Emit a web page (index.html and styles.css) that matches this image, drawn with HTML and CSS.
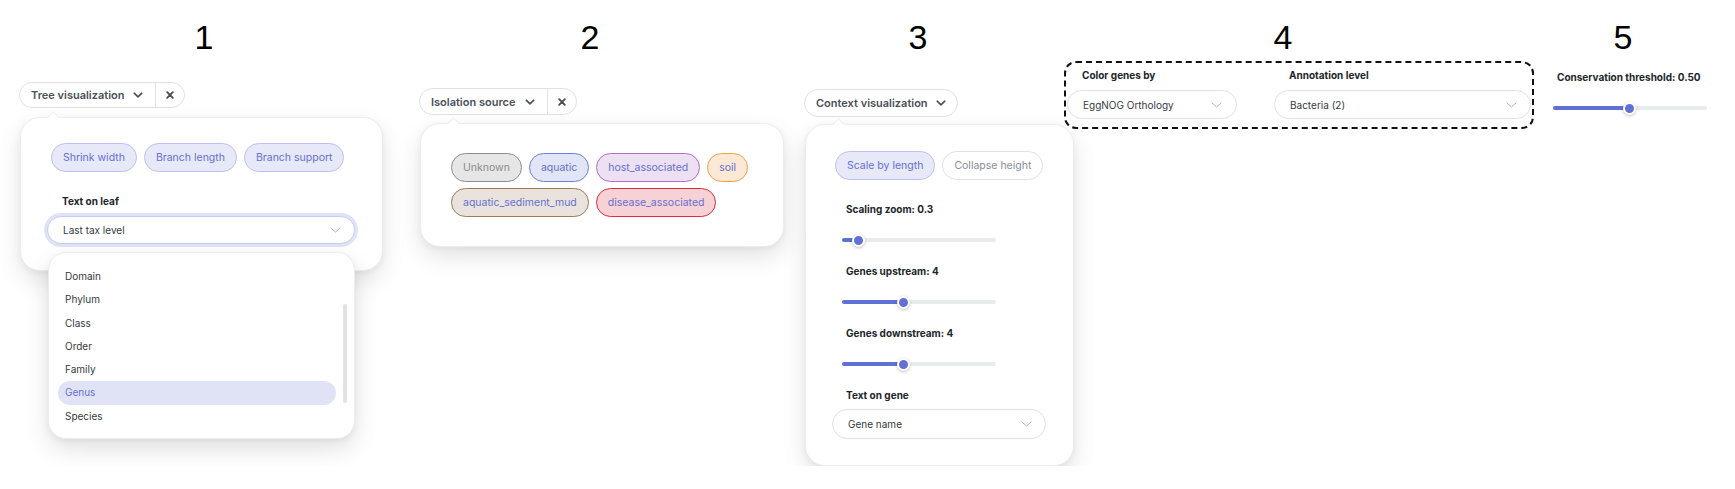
FILE: index.html
```html
<!DOCTYPE html>
<html lang="en">
<head>
<meta charset="utf-8">
<title>Controls</title>
<link rel="stylesheet" href="styles.css">
</head>
<body>
<div class="board">

  <section class="col col1">
    <div class="num">1</div>
    <div class="btn-group g1">
      <span class="btn-main">Tree visualization
        <svg class="chev-b" width="10" height="6" viewBox="0 0 10 6"><path d="M1.2 1.2l3.8 3.6 3.8-3.6"/></svg>
      </span>
      <span class="btn-close"><svg width="8" height="8" viewBox="0 0 8 8"><path d="M1.2 1.2l5.6 5.6M6.8 1.2L1.2 6.8"/></svg></span>
    </div>
    <div class="popover pop1">
      <div class="chips c1">
        <span class="chip on">Shrink width</span>
        <span class="chip on">Branch length</span>
        <span class="chip on">Branch support</span>
      </div>
      <div class="label l1">Text on leaf</div>
      <div class="select focused">
        <span>Last tax level</span>
        <svg class="chev-s" width="11" height="6" viewBox="0 0 11 6"><path d="M1 1l4.5 4 4.5-4"/></svg>
      </div>
      <div class="dropdown">
        <div class="options">
          <div class="opt">Domain</div>
          <div class="opt">Phylum</div>
          <div class="opt">Class</div>
          <div class="opt">Order</div>
          <div class="opt">Family</div>
          <div class="opt sel">Genus</div>
          <div class="opt">Species</div>
        </div>
        <div class="scrollbar"></div>
      </div>
    </div>
  </section>

  <section class="col col2">
    <div class="num">2</div>
    <div class="btn-group g2">
      <span class="btn-main">Isolation source
        <svg class="chev-b" width="10" height="6" viewBox="0 0 10 6"><path d="M1.2 1.2l3.8 3.6 3.8-3.6"/></svg>
      </span>
      <span class="btn-close"><svg width="8" height="8" viewBox="0 0 8 8"><path d="M1.2 1.2l5.6 5.6M6.8 1.2L1.2 6.8"/></svg></span>
    </div>
    <div class="popover pop2">
      <div class="chips">
        <span class="chip src unknown">Unknown</span>
        <span class="chip src aquatic">aquatic</span>
        <span class="chip src host">host_associated</span>
        <span class="chip src soil">soil</span>
        <span class="chip src mud">aquatic_sediment_mud</span>
        <span class="chip src disease">disease_associated</span>
      </div>
    </div>
  </section>

  <section class="col col3">
    <div class="num">3</div>
    <div class="btn-group g3">
      <span class="btn-main">Context visualization
        <svg class="chev-b" width="10" height="6" viewBox="0 0 10 6"><path d="M1.2 1.2l3.8 3.6 3.8-3.6"/></svg>
      </span>
    </div>
    <div class="popover pop3">
      <div class="chips">
        <span class="chip on">Scale by length</span>
        <span class="chip off">Collapse height</span>
      </div>
      <div class="label l3 first">Scaling zoom: 0.3</div>
      <div class="slider s3"><div class="track"><div class="fill" style="width:16px"></div></div><div class="thumb" style="left:16px"></div></div>
      <div class="label l3">Genes upstream: 4</div>
      <div class="slider s3"><div class="track"><div class="fill" style="width:61px"></div></div><div class="thumb" style="left:61px"></div></div>
      <div class="label l3">Genes downstream: 4</div>
      <div class="slider s3"><div class="track"><div class="fill" style="width:61px"></div></div><div class="thumb" style="left:61px"></div></div>
      <div class="label l3 last">Text on gene</div>
      <div class="select plain gene">
        <span>Gene name</span>
        <svg class="chev-s" width="11" height="6" viewBox="0 0 11 6"><path d="M1 1l4.5 4 4.5-4"/></svg>
      </div>
    </div>
  </section>

  <section class="col col4">
    <div class="num">4</div>
    <div class="dashed">
      <div class="field">
        <div class="label l4">Color genes by</div>
        <div class="select plain egg">
          <span>EggNOG Orthology</span>
          <svg class="chev-s" width="11" height="6" viewBox="0 0 11 6"><path d="M1 1l4.5 4 4.5-4"/></svg>
        </div>
      </div>
      <div class="field">
        <div class="label l4">Annotation level</div>
        <div class="select plain bact">
          <span>Bacteria (2)</span>
          <svg class="chev-s" width="11" height="6" viewBox="0 0 11 6"><path d="M1 1l4.5 4 4.5-4"/></svg>
        </div>
      </div>
    </div>
  </section>

  <section class="col col5">
    <div class="num">5</div>
    <div class="label l5">Conservation threshold: 0.50</div>
    <div class="slider s5"><div class="track"><div class="fill" style="width:76px"></div></div><div class="thumb" style="left:76px"></div></div>
  </section>

</div>
</body>
</html>
```

FILE: styles.css
```css
* { box-sizing: border-box; }

body {
  margin: 0;
  background: #fff;
  color: #212529;
  font-family: Inter, "Noto Sans", sans-serif;
}

.board {
  display: flex;
  align-items: flex-start;
  padding: 17px 0 0 19px;
}

.col {
  display: flex;
  flex-direction: column;
  align-items: flex-start;
  flex: none;
}
.col1 { width: 370px; }
.col2 { width: 342px; margin-left: 30px; }
.col3 { width: 228px; margin-left: 43px; }
.col4 { width: 438px; margin-left: 32px; }
.col5 { width: 140px; margin-left: 51px; }

.num {
  align-self: stretch;
  text-align: center;
  font-family: "Liberation Sans", Arial, sans-serif;
  font-size: 34px;
  line-height: 40px;
  color: #000;
}

/* header button group */
.btn-group {
  display: inline-flex;
  align-items: stretch;
  height: 26px;
  border: 1px solid #dee2e6;
  border-radius: 999px;
  background: #fff;
  color: #495057;
  font-size: 11px;
  font-weight: 600;
}
.g1 { margin-top: 25px; }
.g2 { margin-top: 31px; height: 27px; }
.g3 { margin-top: 32px; height: 28px; }

.btn-main {
  display: flex;
  align-items: center;
  gap: 9px;
  padding: 0 12px 0 11px;
}
.g2 .btn-main { gap: 10px; }
.g3 .btn-main { gap: 8px; padding-right: 11px; }

.btn-close {
  display: flex;
  align-items: center;
  justify-content: center;
  width: 29px;
  border-left: 1px solid #dee2e6;
}
.btn-close path {
  stroke: #495057;
  stroke-width: 1.9;
  stroke-linecap: round;
  fill: none;
}

.chev-b path {
  fill: none;
  stroke: #495057;
  stroke-width: 1.6;
  stroke-linecap: round;
  stroke-linejoin: round;
}
.chev-s path {
  fill: none;
  stroke: #aeb4bb;
  stroke-width: 1;
  stroke-linecap: round;
  stroke-linejoin: round;
}

/* popovers */
.popover {
  position: relative;
  background: #fff;
  border: 1px solid #ebedf0;
  border-radius: 20px;
  box-shadow: 0 10px 24px rgba(0, 0, 0, 0.11), 0 2px 6px rgba(0, 0, 0, 0.05);
  margin-left: 1px;
}
.popover::before {
  content: "";
  position: absolute;
  left: 28px;
  top: -5px;
  width: 8px;
  height: 8px;
  background: #fff;
  border-top: 1px solid #ebedf0;
  border-left: 1px solid #ebedf0;
  transform: rotate(45deg);
}
.pop1 { width: 363px; margin-top: 9px; padding: 25px 27px 26px 26px; }
.pop2 { width: 364px; margin-top: 8px; padding: 29px 30px 29px 30px; }
.pop3 { width: 269px; margin-top: 7px; padding: 26px 29px 26px 29px; }

/* chips */
.chips {
  display: flex;
  flex-wrap: wrap;
  gap: 6px 7px;
}
.c1 { margin-left: 4px; }
.chip {
  display: inline-flex;
  align-items: center;
  height: 29px;
  padding: 0 11px;
  border: 1px solid;
  border-radius: 999px;
  font-size: 10.5px;
  white-space: nowrap;
}
.chip.on { background: #e7e9f9; border-color: #bcc2ef; color: #6670d2; }
.chip.off { background: #fff; border-color: #dee2e6; color: #868e96; }
.chip.src { color: #6670d2; }
.chip.unknown { background: #e6e6e6; border-color: #8d8d8d; color: #8b8b8b; }
.chip.aquatic { background: #e2e5f6; border-color: #6f80d8; }
.chip.host { background: #ece0f2; border-color: #b46ac6; }
.chip.soil { background: #fbe8d5; border-color: #eea151; }
.chip.mud { background: #eae3dd; border-color: #a27a54; }
.chip.disease { background: #f6d1d5; border-color: #df2b39; }

/* labels */
.label {
  font-size: 10px;
  font-weight: 700;
  line-height: 14px;
  color: #212529;
  white-space: nowrap;
}
.l1 { margin: 22px 0 8px 15px; }
.l3 { margin: 16px 0 0 11px; }
.l3.first { margin-top: 22px; }
.l3.last { margin-bottom: 7px; }
.l4 { margin: 0 0 8px 15px; }
.l5 { margin: 13px 0 0 4px; font-size: 10px; }

/* selects */
.select {
  display: flex;
  align-items: center;
  justify-content: space-between;
  height: 28px;
  border: 1px solid #dee2e6;
  border-radius: 999px;
  background: #fff;
  padding: 0 13px 0 15px;
  font-size: 10px;
  color: #343a40;
}
.select.focused {
  width: 100%;
  border-color: #c7ccf2;
  box-shadow: 0 0 0 3px #e0e3f7;
}
.select.gene { width: 214px; height: 30px; margin-left: -3px; }
.select.egg { width: 170px; height: 29px; padding-right: 14px; }
.select.bact { width: 257px; height: 29px; }

/* dropdown */
.dropdown {
  position: absolute;
  left: 27px;
  top: 134px;
  width: 307px;
  height: 187px;
  display: flex;
  padding: 12px 7px 11px 9px;
  background: #fff;
  border: 1px solid #ebedf0;
  border-radius: 18px;
  box-shadow: 0 10px 24px rgba(0, 0, 0, 0.12), 0 2px 6px rgba(0, 0, 0, 0.05);
  z-index: 2;
}
.options { flex: 1; display: flex; flex-direction: column; }
.opt {
  height: 23.3px;
  line-height: 23.3px;
  padding-left: 7px;
  border-radius: 999px;
  font-size: 10px;
  color: #343a40;
}
.opt.sel { background: #e0e3f6; color: #6670d2; }
.scrollbar {
  width: 4px;
  height: 99px;
  margin: 39px 0 0 7px;
  border-radius: 2px;
  background: #e2e2e2;
}

/* sliders */
.slider {
  position: relative;
  width: 154px;
  height: 16px;
  display: flex;
  align-items: center;
}
.s3 { margin: 16px 0 0 7px; }
.s5 { margin-top: 16px; }
.track {
  flex: 1;
  height: 4px;
  border-radius: 2px;
  background: #e9ecef;
  overflow: hidden;
}
.fill { height: 100%; background: #6070d4; }
.thumb {
  position: absolute;
  top: 1.5px;
  width: 13px;
  height: 13px;
  margin-left: -6.5px;
  border-radius: 50%;
  background: #6070d4;
  border: 2px solid #fff;
  box-shadow: 0 1px 3px rgba(0, 0, 0, 0.25);
}

/* dashed group */
.dashed {
  display: flex;
  gap: 37px;
  width: 470px;
  margin-top: 4px;
  padding: 5px 1px 8px 1px;
  border: 2px dashed #111;
  border-radius: 12px;
}
.field { display: flex; flex-direction: column; align-items: flex-start; }
```
